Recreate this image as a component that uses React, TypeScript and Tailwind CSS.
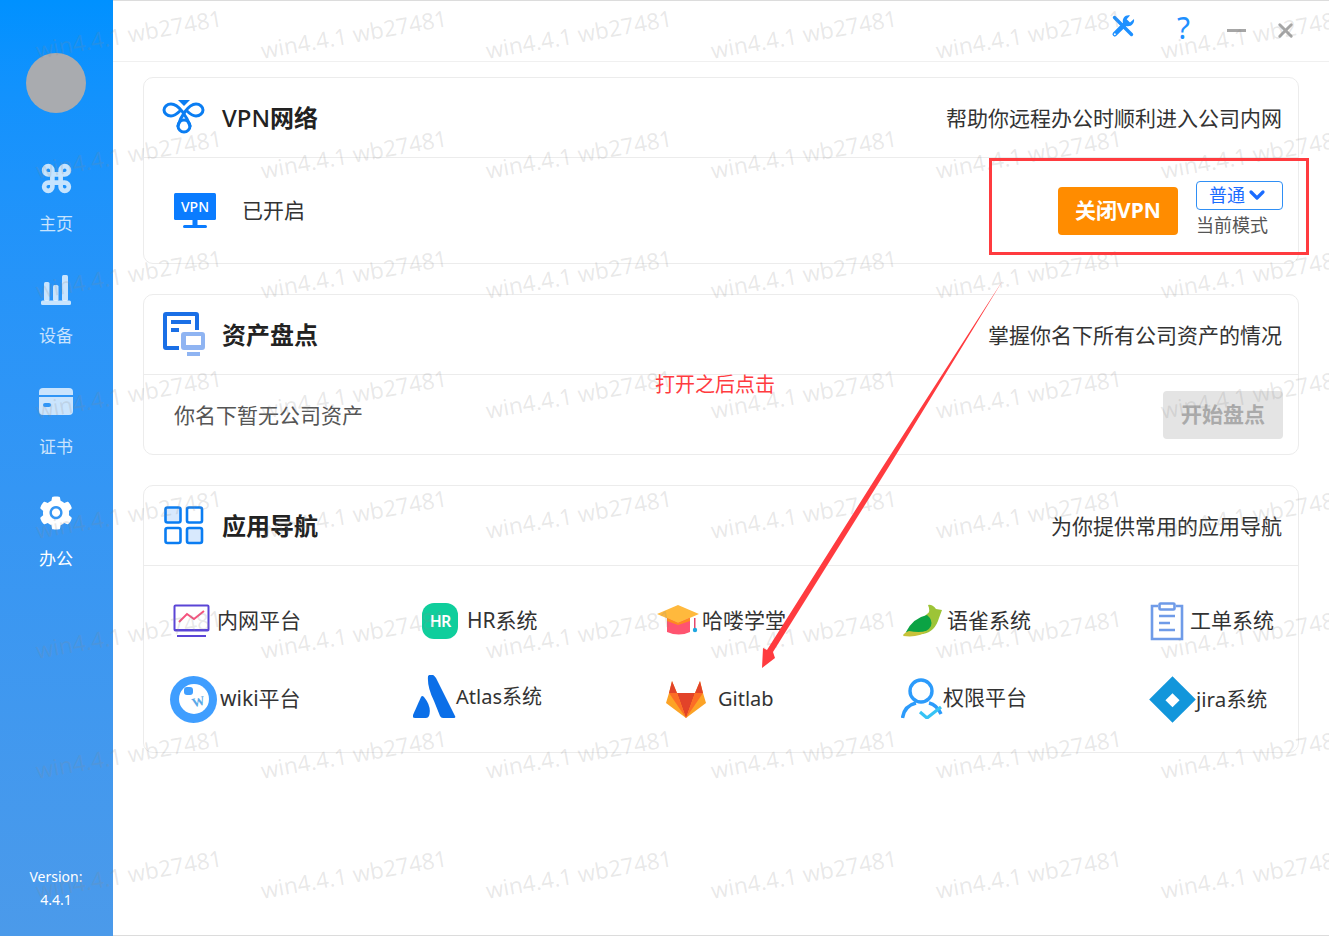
import React from 'react';
import { Command, ChevronDown, X } from 'lucide-react';
import { AiFillSetting } from 'react-icons/ai';

const font = { fontFamily: '"Noto Sans", "Noto Sans CJK SC", sans-serif' };

const VpnLogo = () => (
  <svg width="44" height="38" viewBox="0 0 44 38" fill="none" stroke="#0a7df2" strokeWidth="3" strokeLinecap="round">
    <path d="M28 27 C 25 18 17 5 9 5 C 5 5 2 8 2 11 C 2 14 5 17 9 17 C 13 17 16 14 19 11" />
    <path d="M16 27 C 18 19 26 5 34 5 C 38 5 41 8 41 11 C 41 14 38 17 34 17 C 30 17 27 14 25 12" />
    <circle cx="22" cy="27" r="6" />
    <path d="M16 1 H28 L22 7 Z" fill="#0a7df2" stroke="none" />
  </svg>
);

const VpnScreen = () => (
  <svg width="42" height="36" viewBox="0 0 42 36">
    <rect width="42" height="27" rx="1.5" fill="#0a7cff" />
    <rect x="18.5" y="27" width="5" height="6" fill="#0a7cff" />
    <rect x="9" y="32" width="24" height="3" rx="1.5" fill="#0a7cff" />
    <text x="21" y="19" textAnchor="middle" fill="#fff" fontSize="14" fontWeight="500" fontFamily="Noto Sans">VPN</text>
  </svg>
);

const AssetIcon = () => (
  <svg width="42" height="46" viewBox="0 0 42 46">
    <path d="M3 0 H33 a3 3 0 0 1 3 3 V18 H32 V4 H4 V34 H16 V38 H3 a3 3 0 0 1 -3 -3 V3 a3 3 0 0 1 3 -3 Z" fill="#1a6fe6" />
    <rect x="8" y="8" width="20" height="4" fill="#1a6fe6" />
    <rect x="8" y="16" width="8" height="4" fill="#1a6fe6" />
    <path d="M21 20 H39 a3 3 0 0 1 3 3 V35 a3 3 0 0 1 -3 3 H21 a3 3 0 0 1 -3 -3 V23 a3 3 0 0 1 3 -3 Z M23 24 V33 H38 V24 Z" fill="#8fb4f2" fillRule="evenodd" />
    <rect x="24" y="40" width="13" height="4" fill="#8fb4f2" />
  </svg>
);

const GridIcon = () => (
  <svg width="40" height="40" viewBox="0 0 40 40" stroke="#0a7df2" strokeWidth="2.6">
    <rect x="1.5" y="1.5" width="15" height="15" rx="2" fill="#d8e9fd" />
    <rect x="23" y="1.5" width="15" height="15" rx="2" fill="#fff" />
    <rect x="1.5" y="22" width="15" height="15" rx="2" fill="#fff" />
    <rect x="23" y="22" width="15" height="15" rx="2" fill="#d8e9fd" />
  </svg>
);

const BarsIcon = () => (
  <svg width="30" height="30" viewBox="0 0 30 30" fill="#fff" fillOpacity="0.75">
    <rect x="3" y="7" width="5.5" height="19" rx="1.5" />
    <rect x="12" y="10" width="5.5" height="16" rx="1.5" />
    <rect x="21" y="0" width="6" height="26" rx="1.5" />
    <rect x="0" y="25.5" width="30" height="4.5" rx="1.5" />
  </svg>
);

const CardIcon = () => (
  <svg width="34" height="27" viewBox="0 0 34 27" fill="#fff" fillOpacity="0.75">
    <path d="M4 0 H30 a4 4 0 0 1 4 4 V7 H0 V4 a4 4 0 0 1 4 -4 Z" />
    <path fillRule="evenodd" d="M0 9 H34 V23 a4 4 0 0 1 -4 4 H4 a4 4 0 0 1 -4 -4 Z M6 15 a2 2 0 0 0 0 4 H10 a2 2 0 0 0 0 -4 Z" />
  </svg>
);

const ToolIcon = () => (
  <svg width="24" height="24" viewBox="0 0 24 24" fill="#1e90ff">
    <path d="M3.5 3.5 L20.5 20.5" stroke="#1e90ff" strokeWidth="3.4" strokeLinecap="round" />
    <path d="M3.8 20.2 L14.5 9.5" stroke="#1e90ff" strokeWidth="4.6" strokeLinecap="round" />
    <path d="M23 5 L19 8.5 L15.7 5.3 L19 1.4 C14.5 0.4 10.8 4.2 12 9 L15 12 C20 13.2 23.8 9.6 23 5 Z" />
    <circle cx="3.8" cy="20.2" r="1" fill="#fff" />
  </svg>
);

const MonitorIcon = () => (
  <svg width="38" height="34" viewBox="0 0 38 34" fill="none">
    <rect x="1.5" y="1.5" width="34" height="25" rx="1" stroke="#5a45d6" strokeWidth="2" />
    <path d="M6 18 L14 10 L21 15 L31 7" stroke="#f5537e" strokeWidth="2" />
    <path d="M1 26 H36" stroke="#5a45d6" strokeWidth="2" />
    <rect x="4" y="31" width="29" height="2" fill="#5a45d6" />
  </svg>
);

const HrIcon = () => (
  <div className="flex h-[36px] w-[36px] items-center justify-center rounded-[12px] bg-[#0fce9c] text-[16px] font-semibold tracking-[-1px] text-white">HR</div>
);

const HatIcon = () => (
  <svg width="44" height="32" viewBox="0 0 44 32">
    <path d="M10 12 H33 V27 Q22 32 10 27 Z" fill="#ff5470" />
    <path d="M0 9 L21 0 L42 9 L21 18 Z" fill="#ffb93d" />
    <path d="M10 13 L21 18 L33 13 V16 L21 20 L10 16 Z" fill="#ff8a1f" />
    <rect x="37" y="13" width="1.5" height="11" fill="#e5486c" />
    <circle cx="38" cy="25" r="2.2" fill="#1ea6e0" />
  </svg>
);

const BirdIcon = () => (
  <svg width="40" height="34" viewBox="0 0 40 34">
    <path d="M0 31 Q10 32 20 30 Q32 28 36 14 L39 6 L33 5 Q29 0 25 1 Q28 8 24 10 Z" fill="#9dc437" />
    <path d="M3 28 Q10 14 24 11 Q30 16 28 22 Q24 30 10 29 Z" fill="#0ba344" />
    <path d="M0 32 Q2 28 6 27 Q16 29 24 27 Q16 34 0 32 Z" fill="#c8c23a" />
  </svg>
);

const ClipboardIcon = () => (
  <svg width="34" height="39" viewBox="0 0 34 39" fill="none" stroke="#6f9be8" strokeWidth="2.6">
    <path d="M8 4 H2 V37 H32 V4 H26" />
    <rect x="9.5" y="1.5" width="15" height="6" rx="1" />
    <path d="M9 14 H25 M9 21 H20 M9 28 H25" />
  </svg>
);

const WikiIcon = () => (
  <div className="flex h-[47px] w-[47px] items-center justify-center rounded-full bg-[#3f9eff]">
    <div className="relative flex h-[30px] w-[30px] items-center justify-center rounded-full bg-white">
      <div className="absolute left-[5px] top-[3px] h-[8px] w-[9px] rounded-[3px] bg-[#3f9eff]" />
      <span className="-rotate-[15deg] pl-[7px] pt-[7px] text-[13px] font-bold leading-none text-[#5aa9e8]" style={{ fontFamily: '"Liberation Serif", serif' }}>W</span>
    </div>
  </div>
);

const AtlasIcon = () => (
  <svg width="43" height="44" viewBox="0 0 43 44" fill="#0b6fe8">
    <path d="M15 1 Q14 12 21 26 L27 41 Q28 43 30 43 H41 Q43 43 42 41 L23 3 Q19 -3 15 1 Z" />
    <path d="M11 22 Q9 20 8 22 L0 40 Q-1 43 2 43 H13 Q15 43 16 41 Q19 32 11 22 Z" />
  </svg>
);

const GitlabIcon = () => (
  <svg width="40" height="37" viewBox="0 0 40 37">
    <path d="M20 37 L0 22 L3 12 L6 0 L11 12 H29 L34 0 L37 12 L40 22 Z" fill="#fca326" />
    <path d="M20 37 L11 12 H29 Z" fill="#e24329" />
    <path d="M20 37 L11 12 H3 Z" fill="#fc6d26" />
    <path d="M20 37 L29 12 H37 Z" fill="#fc6d26" />
    <path d="M3 12 L6 0 L11 12 Z M37 12 L34 0 L29 12 Z" fill="#e24329" />
  </svg>
);

const UserCheckIcon = () => (
  <svg width="42" height="41" viewBox="0 0 42 41" fill="none">
    <circle cx="20" cy="13" r="11" stroke="#2c9bfb" strokeWidth="3.4" />
    <path d="M1.5 40 Q3 28 15 25 M28 25 Q36 27 40 36" stroke="#2c9bfb" strokeWidth="3.4" />
    <path d="M19 34 L26 40 L40 29" stroke="#36c3f5" strokeWidth="3.2" />
  </svg>
);

const JiraIcon = () => (
  <div className="flex h-[48px] w-[48px] items-center justify-center">
    <div className="flex h-[33px] w-[33px] rotate-45 items-center justify-center bg-[#1296db]">
      <div className="h-[10px] w-[10px] bg-white" />
    </div>
  </div>
);

const apps = [
  [
    { name: '内网平台', icon: <MonitorIcon />, cls: 'ml-[29px] gap-[6px]', text: 'text-[21px]' },
    { name: 'HR系统', icon: <HrIcon />, cls: 'ml-[29px] gap-[9px]', text: 'text-[21px]' },
    { name: '哈喽学堂', icon: <HatIcon />, cls: 'ml-[28px] gap-[1px]', text: 'text-[21px]' },
    { name: '语雀系统', icon: <BirdIcon />, cls: 'ml-[29px] gap-[4px]', text: 'text-[21px]' },
    { name: '工单系统', icon: <ClipboardIcon />, cls: 'ml-[29px] gap-[6px]', text: 'text-[21px]' },
  ],
  [
    { name: 'wiki平台', icon: <WikiIcon />, cls: 'ml-[26px] gap-[3px]', text: 'text-[21px]' },
    { name: 'Atlas系统', icon: <AtlasIcon />, cls: 'ml-[20px] -mt-[5px] gap-0', text: 'text-[20px]' },
    { name: 'Gitlab', icon: <GitlabIcon />, cls: 'ml-[37px] gap-[12px]', text: 'text-[20px]' },
    { name: '权限平台', icon: <UserCheckIcon />, cls: 'ml-[27px] -mt-[2px] gap-0', text: 'text-[21px]' },
    { name: 'jira系统', icon: <JiraIcon />, cls: 'ml-[27px] gap-0', text: 'text-[20.5px]' },
  ],
];

const navItems = [
  { label: '主页', icon: <Command size={33} strokeWidth={3.4} className="text-white/75" /> },
  { label: '设备', icon: <BarsIcon /> },
  { label: '证书', icon: <CardIcon /> },
  { label: '办公', icon: <AiFillSetting size={38} className="text-white" />, active: true },
];

const CardHeader = ({ icon, title, desc }: { icon: React.ReactNode; title: React.ReactNode; desc: string }) => (
  <div className="flex h-[80px] items-center border-b border-[#ececec] pl-[18px] pr-[16px]">
    <div className="flex w-[44px] items-center justify-center">{icon}</div>
    <span className="ml-[16px] text-[24px] font-bold text-[#222]">{title}</span>
    <span className="ml-auto pt-[2px] text-[21px] text-[#333]">{desc}</span>
  </div>
);

const marks = Array.from({ length: 48 });

export default function App() {
  return (
    <div className="relative flex h-[936px] w-[1329px] overflow-hidden bg-white" style={font}>
      <aside className="flex w-[113px] shrink-0 flex-col items-center bg-gradient-to-b from-[#0091ff] to-[#4b9aea] pr-[1px] pt-[53px] text-white">
        <div className="h-[60px] w-[60px] rounded-full bg-[#a9abaf]" />
        <nav className="mt-[46px] flex flex-col">
          {navItems.map((n) => (
            <div key={n.label} className="flex h-[111.5px] flex-col items-center">
              <div className="flex h-[38px] items-center justify-center">{n.icon}</div>
              <span className={`mt-[14px] text-[17px] ${n.active ? 'text-white' : 'text-white/75'}`}>{n.label}</span>
            </div>
          ))}
        </nav>
        <div className="mt-auto pb-[25px] text-center text-[14px] leading-[23px]">
          <div>Version:</div>
          <div>4.4.1</div>
        </div>
      </aside>

      <main className="flex min-w-0 flex-1 flex-col border-y border-[#dcdcdc]">
        <header className="flex h-[61px] shrink-0 items-center border-b border-[#f0f0f0]">
          <div className="ml-[998px] -mt-[10px]"><ToolIcon /></div>
          <span className="ml-[42px] -mt-[7px] text-[30px] leading-none text-[#1e90ff]">?</span>
          <div className="ml-[37px] -mt-[2px] h-[3px] w-[19px] bg-[#a6a6a6]" />
          <X size={23} strokeWidth={3} className="ml-[28px] -mt-[2px] text-[#a6a6a6]" />
        </header>

        <div className="flex flex-col gap-[30px] px-[30px] pt-[15px]">
          <section className="h-[187px] rounded-[10px] border border-[#ececec]">
            <CardHeader icon={<VpnLogo />} title={<><span className="font-medium">VPN</span>网络</>} desc="帮助你远程办公时顺利进入公司内网" />
            <div className="flex h-[105px] items-center pl-[30px] pr-[15px]">
              <VpnScreen />
              <span className="ml-[26px] text-[21px] text-[#333]">已开启</span>
              <button className="ml-auto h-[48px] w-[120px] rounded-[4px] bg-[#ff8c00] text-[21px] font-bold text-white">关闭VPN</button>
              <div className="ml-[18px] -mt-[3px] flex w-[87px] flex-col">
                <div className="flex h-[29px] items-center rounded-[4px] border border-[#2f8ff5] pl-[12px] text-[18px] text-[#1a6cff]">
                  普通
                  <ChevronDown size={24} strokeWidth={3.2} />
                </div>
                <span className="mt-[2px] text-[18px] leading-[26px] text-[#555]">当前模式</span>
              </div>
            </div>
          </section>

          <section className="h-[161px] rounded-[10px] border border-[#ececec]">
            <CardHeader icon={<AssetIcon />} title="资产盘点" desc="掌握你名下所有公司资产的情况" />
            <div className="flex h-[79px] items-center pl-[30px] pr-[15px]">
              <span className="pt-[2px] text-[21px] text-[#555]">你名下暂无公司资产</span>
              <button className="ml-auto h-[48px] w-[120px] rounded-[4px] bg-[#e4e4e4] text-[21px] font-bold text-[#aaa]">开始盘点</button>
            </div>
          </section>

          <section className="h-[268px] rounded-[10px] border border-[#ececec]">
            <CardHeader icon={<GridIcon />} title="应用导航" desc="为你提供常用的应用导航" />
            <div className="flex flex-col pt-[16px]">
              {apps.map((row, i) => (
                <div key={i} className="grid h-[78px] grid-cols-[249px_236px_245px_247px_179px] items-center">
                  {row.map((a) => (
                    <div key={a.name} className={`flex items-center ${a.cls}`}>
                      {a.icon}
                      <span className={`whitespace-nowrap text-[#333] ${a.text}`}>{a.name}</span>
                    </div>
                  ))}
                </div>
              ))}
            </div>
          </section>
        </div>
      </main>

      {/* watermark */}
      <div className="pointer-events-none absolute inset-0 -top-[9px] grid grid-cols-[repeat(6,225px)] auto-rows-[120px] items-center overflow-hidden pl-[36px] text-[22.5px] text-[#8a8a8a]/20" style={{ fontFamily: '"Open Sans", sans-serif' }}>
        {marks.map((_, i) => (
          <span key={i} className="origin-left -rotate-[10deg] whitespace-nowrap">win4.4.1 wb27481</span>
        ))}
      </div>

      {/* annotation */}
      <div className="absolute left-[989px] top-[158px] h-[97px] w-[320px] border-[3px] border-[#ff3b3f]" />
      <span className="absolute left-[655px] top-[370px] text-[20px] text-[#ff3b3f]">打开之后点击</span>
      <svg className="pointer-events-none absolute left-0 top-0" width="1329" height="936">
        <path d="M1003 280 L888 468 L773 652 L775 658 L762 668 L763 648 L767 650 L882 468 Z" fill="#ff3b3f" />
      </svg>
    </div>
  );
}
